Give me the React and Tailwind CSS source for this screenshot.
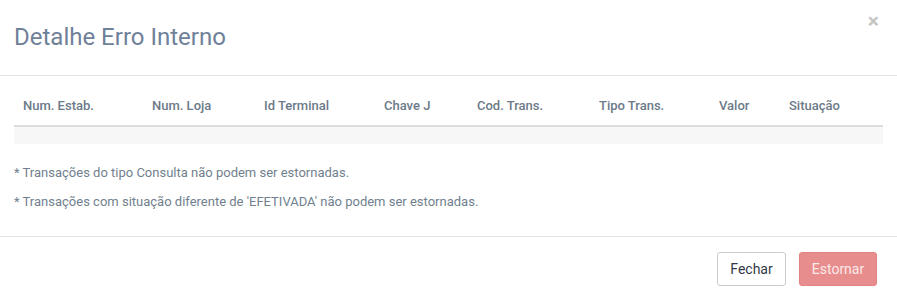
export default function App() {
  const cols = ["Num. Estab.", "Num. Loja", "Id Terminal", "Chave J", "Cod. Trans.", "Tipo Trans.", "Valor", "Situação"];
  return (
    <div className="w-[897px] h-[304px] bg-white overflow-hidden" style={{ fontFamily: "Roboto, 'Liberation Sans', sans-serif" }}>
      <div className="relative h-[76px] border-b border-[#e5e5e5] pl-[14px] pt-[22px]">
        <h4 className="text-[24px] leading-[30px] text-[#6f8199] font-normal">Detalhe Erro Interno</h4>
        <button className="absolute right-[18px] top-[11px] text-[#c5c5c5] text-[21px] font-bold leading-none">×</button>
      </div>
      <div className="px-[14px] pt-[15px] h-[161px] border-b border-[#e5e5e5]">
        <div className="grid grid-cols-[129px_112px_120px_93px_122px_120px_70px_1fr] pl-[9px] pt-[6px] pb-[10px] border-b-2 border-[#dddddd]">
          {cols.map((n) => (
            <div key={n} className="text-left text-[13px] leading-[18px] font-medium text-[#6c7a89]">
              {n}
            </div>
          ))}
        </div>
        <div className="h-[17px] bg-[#f7f7f7]"></div>
        <p className="mt-[20px] text-[13px] leading-[18px] text-[#717f8e]">* Transações do tipo Consulta não podem ser estornadas.</p>
        <p className="mt-[11px] text-[13px] leading-[18px] text-[#717f8e]">* Transações com situação diferente de 'EFETIVADA' não podem ser estornadas.</p>
      </div>
      <div className="flex justify-end gap-[13px] pr-[20px] pt-[15px]">
        <button className="h-[34px] w-[69px] rounded-[3px] border border-[#cccccc] bg-white text-[14px] text-[#333a45]">Fechar</button>
        <button className="h-[34px] w-[78px] rounded-[3px] border border-[#e38383] bg-[#e88d8d] text-[14px] text-[#fbe9e9]">Estornar</button>
      </div>
    </div>
  );
}
